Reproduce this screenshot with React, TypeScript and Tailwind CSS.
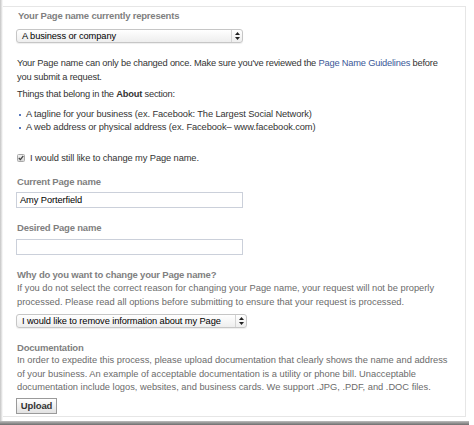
import React from "react";

const font = "font-['Liberation_Sans',Arial,sans-serif]";

function Stepper() {
  return (
    <svg width="5" height="8" viewBox="0 0 5 8" className="text-[#222]">
      <path d="M2.5 0 L5 3 H0 Z" fill="currentColor" />
      <path d="M2.5 8 L5 5 H0 Z" fill="currentColor" />
    </svg>
  );
}

function FakeSelect({ label, width, arrow }: { label: string; width: string; arrow: string }) {
  return (
    <div
      className={`${width} h-[14px] flex items-stretch rounded-[3px] border border-[#c6c6c6] bg-gradient-to-b from-white to-[#eeeeee] shadow-[0_1px_1px_rgba(0,0,0,0.07)]`}
    >
      <div className="flex-1 pl-[5px] text-[9.3px] leading-[12px] text-black whitespace-nowrap tracking-[-0.1px]">
        {label}
      </div>
      <div className={`${arrow} border-l border-[#d4d4d4] flex items-center justify-center`}>
        <Stepper />
      </div>
    </div>
  );
}

function Heading({ children }: { children: React.ReactNode }) {
  return (
    <div className="text-[9.5px] font-bold text-[#7f7f7f] leading-[14px] tracking-[-0.2px] whitespace-nowrap">
      {children}
    </div>
  );
}

export default function App() {
  return (
    <div className={`relative w-[474px] h-[425px] bg-white overflow-hidden ${font} text-[9.3px] text-[#333]`}>
      {/* left drop shadow */}
      <div className="absolute left-0 top-0 bottom-0 w-[3px] bg-gradient-to-r from-[#c4c4c4] to-white" />

      <div className="ml-[3px] mr-[8px] mt-[6px] h-[411px] border-t border-r border-b border-[#e6e6e6] pl-[13px] pt-[2px] leading-[14px]">
        <div className="pl-[2px]">
          <Heading>Your Page name currently represents</Heading>
        </div>
        <div className="mt-[6px]">
          <FakeSelect label="A business or company" width="w-[227px]" arrow="w-[11px]" />
        </div>

        <p className="mt-[13px] pl-[1px] whitespace-nowrap tracking-[-0.2px]">
          Your Page name can only be changed once. Make sure you've reviewed the{" "}
          <span className="text-[#3b5998]">Page Name Guidelines</span> before
          <br />
          you submit a request.
        </p>

        <p className="mt-[3px] pl-[1px] whitespace-nowrap tracking-[-0.2px]">
          Things that belong in the <span className="font-bold text-[#333]">About</span> section:
        </p>

        <ul className="mt-[7px] leading-[13px] whitespace-nowrap tracking-[-0.1px]">
          <li className="flex items-center gap-[5px] pl-[3px]">
            <span className="w-[2px] h-[2px] bg-[#5a7bbf]" />A tagline for your business (ex. Facebook: The Largest Social Network)
          </li>
          <li className="flex items-center gap-[5px] pl-[3px]">
            <span className="w-[2px] h-[2px] bg-[#5a7bbf]" />A web address or physical address (ex. Facebook– www.facebook.com)
          </li>
        </ul>

        <label className="mt-[17px] pl-[1px] flex items-center gap-[5px] whitespace-nowrap tracking-[-0.1px]">
          <span className="w-[8px] h-[8px] rounded-[1.5px] border border-[#a8a8a8] bg-gradient-to-b from-[#f2f2f2] to-[#d6d6d6] flex items-center justify-center">
            <svg width="6" height="6" viewBox="0 0 6 6">
              <path d="M0.8 3 L2.4 4.6 L5.3 0.9" stroke="#444" strokeWidth="1.3" fill="none" />
            </svg>
          </span>
          I would still like to change my Page name.
        </label>

        <div className="mt-[10px] pl-[1px]">
          <Heading>Current Page name</Heading>
        </div>
        <div className="mt-[3px] w-[227px] h-[16px] border border-[#cbd0da] bg-white pl-[3px] text-[9.3px] leading-[14px] text-black tracking-[-0.1px]">
          Amy Porterfield
        </div>

        <div className="mt-[13px] pl-[1px]">
          <Heading>Desired Page name</Heading>
        </div>
        <div className="mt-[4px] w-[227px] h-[16px] border border-[#cbd0da] bg-white" />

        <div className="mt-[13px] pl-[1px]">
          <Heading>Why do you want to change your Page name?</Heading>
        </div>
        <p className="-mt-[1px] pl-[1px] leading-[14px] text-[#6b6b6b] whitespace-nowrap">
          If you do not select the correct reason for changing your Page name, your request will not be properly
          <br />
          processed. Please read all options before submitting to ensure that your request is processed.
        </p>
        <div className="mt-[5px]">
          <div className="h-[13px]">
            <FakeSelect label="I would like to remove information about my Page" width="w-[231px]" arrow="w-[11px]" />
          </div>
        </div>

        <div className="mt-[14px] pl-[1px]">
          <Heading>Documentation</Heading>
        </div>
        <p className="-mt-[1px] pl-[1px] leading-[13.5px] text-[#6b6b6b] whitespace-nowrap">
          In order to expedite this process, please upload documentation that clearly shows the name and address
          <br />
          of your business. An example of acceptable documentation is a utility or phone bill. Unacceptable
          <br />
          documentation include logos, websites, and business cards. We support .JPG, .PDF, and .DOC files.
        </p>
        <button className="mt-[3px] h-[16px] w-[41px] border border-[#9a9a9a] bg-gradient-to-b from-white to-[#e2e2e2] text-[9.5px] font-bold text-[#333] leading-[14px] tracking-[-0.1px]">
          Upload
        </button>
      </div>

      {/* bottom drop shadow */}
      <div className="absolute left-0 right-[5px] bottom-0 h-[4px] bg-gradient-to-b from-[#bdbdbd] to-[#6e6e6e]" />
    </div>
  );
}
